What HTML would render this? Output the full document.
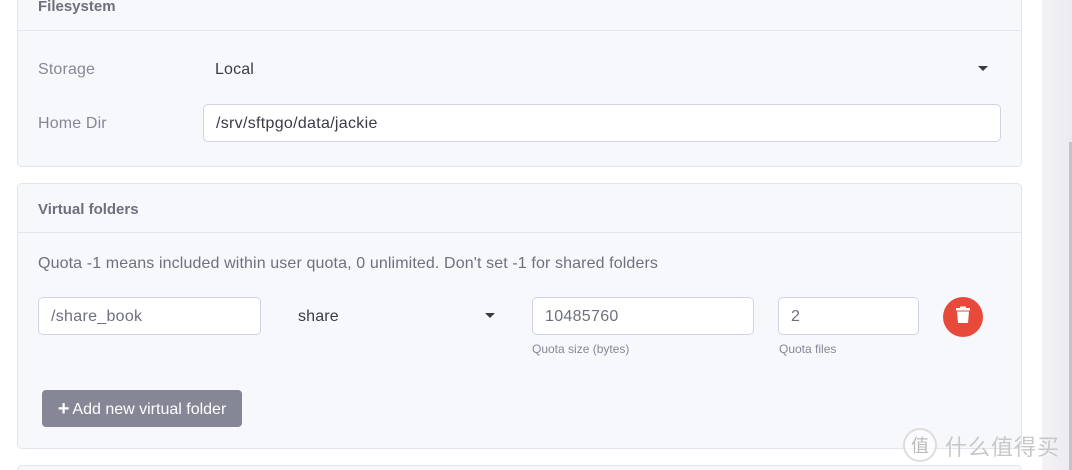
<!DOCTYPE html>
<html style="overflow:hidden;height:470px"><head><style>
body{margin:0;width:1072px;height:470px;overflow:hidden;background:#fff;font-family:"Liberation Sans",sans-serif;position:relative}
.strip{position:absolute;left:1042px;top:0;width:30px;height:470px;background:linear-gradient(90deg,#f3f3f7,#ebebf0)}
.sb{position:absolute;left:1069px;top:142px;width:3px;height:328px;background:#c4c4c8}
.card{position:absolute;left:17px;width:1003px;background:#f7f8fc;border:1px solid #e3e5ee;border-radius:5px}
.hd{position:absolute;left:20px;font-weight:bold;font-size:15px;color:#6e707e}
.line{position:absolute;left:0;right:0;height:1px;background:#e3e5ee}
.t{position:absolute;font-size:16px;white-space:nowrap;letter-spacing:0.15px}
.lbl{color:#858796}
.val{color:#3a3b45}
.inp{position:absolute;background:#fff;border:1px solid #d1d3e2;border-radius:5px;box-sizing:border-box;font-size:16px;color:#6e707e;padding:2px 0 0 12px;display:flex;align-items:center;letter-spacing:0.3px}
.caret{position:absolute;width:0;height:0;border-left:5px solid transparent;border-right:5px solid transparent;border-top:5px solid #3a3b45}
.small{position:absolute;font-size:12px;color:#858796}
</style></head><body>
<div class="strip"></div><div class="sb"></div>
<div class="card" style="top:-10px;height:175px">
 <div class="hd" style="top:7px">Filesystem</div>
 <div class="line" style="top:39px"></div>
</div>
<div class="t lbl" style="left:38px;top:61px">Storage</div>
<div class="t val" style="left:215px;top:61px">Local</div>
<div class="caret" style="left:978px;top:66px"></div>
<div class="t lbl" style="left:38px;top:115px">Home Dir</div>
<div class="inp" style="left:203px;top:104px;width:798px;height:38px;color:#3a3b45">/srv/sftpgo/data/jackie</div>

<div class="card" style="top:183px;height:264px">
 <div class="hd" style="top:17px">Virtual folders</div>
 <div class="line" style="top:48px"></div>
</div>
<div class="t lbl" style="left:38px;top:255px;color:#6e707e;letter-spacing:0.12px">Quota -1 means included within user quota, 0 unlimited. Don't set -1 for shared folders</div>
<div class="inp" style="left:38px;top:297px;width:223px;height:38px">/share_book</div>
<div class="t val" style="left:298px;top:308px">share</div>
<div class="caret" style="left:485px;top:313px"></div>
<div class="inp" style="left:532px;top:297px;width:222px;height:38px">10485760</div>
<div class="small" style="left:532px;top:342px">Quota size (bytes)</div>
<div class="inp" style="left:778px;top:297px;width:141px;height:38px">2</div>
<div class="small" style="left:779px;top:342px">Quota files</div>
<div style="position:absolute;left:943px;top:297px;width:40px;height:40px;border-radius:50%;background:#e74a3b">
 <svg width="40" height="40" viewBox="0 0 40 40"><rect x="13" y="11" width="14" height="2.5" fill="#fff"/><rect x="17" y="9.5" width="6" height="2" fill="#fff"/><path d="M14 14.5h12l-1 11.5h-10z" fill="#fff"/></svg>
</div>
<div style="position:absolute;left:42px;top:390px;width:200px;height:37px;background:#858796;border-radius:4px;color:#fff;font-size:16px;display:flex;align-items:center;justify-content:center;padding-top:2px;box-sizing:border-box"><b style="font-size:20px;margin-right:3px">+</b>Add new virtual folder</div>
<div class="card" style="top:465px;height:10px"></div>
<div style="position:absolute;left:903px;top:428px;width:30px;height:30px;border-radius:50%;border:2px solid #ddd;background:rgba(255,255,255,.6);color:#bbb;font-size:18px;text-align:center;line-height:30px;font-family:'Noto Sans CJK SC',sans-serif">值</div>
<div style="position:absolute;left:945px;top:430px;color:#c8c8c8;font-size:22px;font-family:'Noto Sans CJK SC',sans-serif;letter-spacing:1px">什么值得买</div>
</body></html>
